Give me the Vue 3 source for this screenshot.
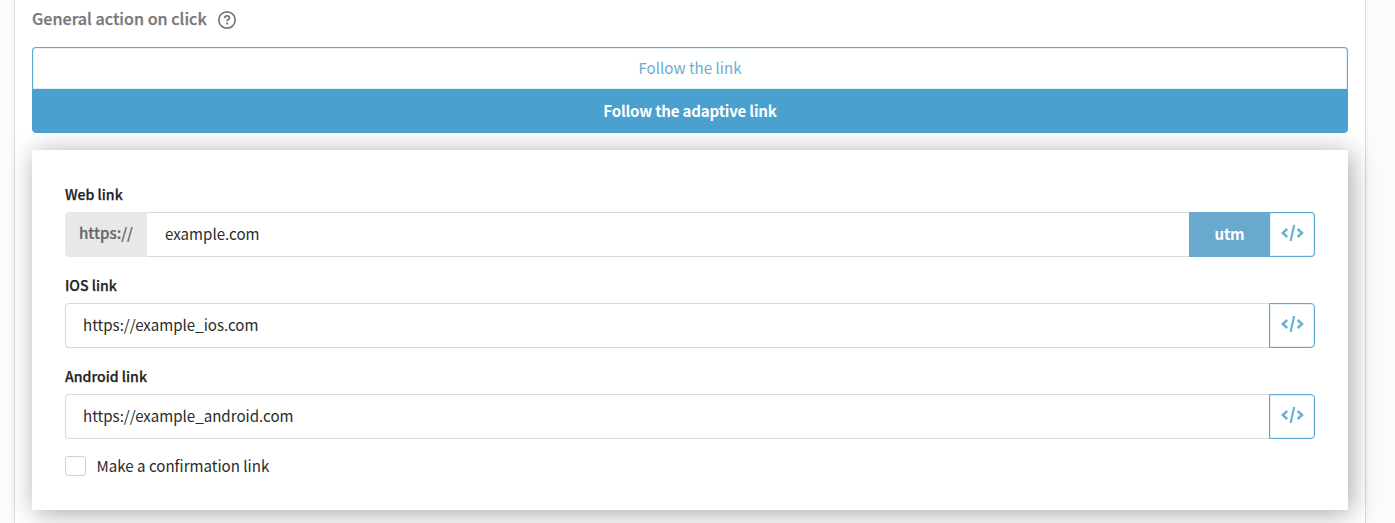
<template>
  <div class="page">
    <section class="panel">
      <div class="heading">
        <span class="title">General action on click</span>
        <svg class="help" width="20" height="20" viewBox="0 0 20 20" fill="none">
          <circle cx="10" cy="10" r="8.2" stroke="#777" stroke-width="1.7" />
          <path d="M7.6 8.1C7.7 6.6 8.7 5.9 10 5.9c1.4 0 2.4.8 2.4 2 0 1.6-2.3 1.7-2.3 3.4" stroke="#777" stroke-width="1.8" />
          <circle cx="10.1" cy="13.6" r="1.1" fill="#777" />
        </svg>
      </div>

      <div class="tabs">
        <button
          v-for="tab in tabs"
          :key="tab.id"
          class="tab"
          :class="{ active: tab.id === activeTab }"
          @click="activeTab = tab.id"
        >
          <span>{{ tab.name }}</span>
        </button>
      </div>

      <div class="card">
        <div v-for="field in fields" :key="field.id" class="field">
          <label class="label" :for="field.id">{{ field.label }}</label>
          <div class="group">
            <span v-if="field.prefix" class="prefix">{{ field.prefix }}</span>
            <input
              :id="field.id"
              v-model="field.value"
              class="input"
              :class="{ prefixed: field.prefix }"
              type="text"
              spellcheck="false"
            />
            <button v-if="field.utm" class="utm">utm</button>
            <button class="code" :class="{ joined: field.utm }">
              <svg width="24" height="20" viewBox="0 0 24 20" fill="none" stroke="#6cb0d4" stroke-width="2.5">
                <path d="M7.2 6L2.8 10l4.4 4" />
                <path d="M17.6 6l4.4 4-4.4 4" />
                <path d="M14.2 2l-3.6 16" stroke-width="2.2" />
              </svg>
            </button>
          </div>
        </div>

        <label class="confirm">
          <input v-model="confirmation" type="checkbox" class="checkbox" />
          <span class="confirm-text">Make a confirmation link</span>
        </label>
      </div>
    </section>
  </div>
</template>

<script setup>
import { ref } from 'vue';

const tabs = [
  { id: 'link', name: 'Follow the link' },
  { id: 'adaptive', name: 'Follow the adaptive link' }
];

const activeTab = ref('adaptive');
const confirmation = ref(false);

const fields = ref([
  { id: 'web', label: 'Web link', prefix: 'https://', value: 'example.com', utm: true },
  { id: 'ios', label: 'IOS link', value: 'https://example_ios.com' },
  { id: 'android', label: 'Android link', value: 'https://example_android.com' }
]);
</script>

<style>
body {
  margin: 0;
  background: #fbfbfb;
}
</style>

<style scoped>
.page {
  box-sizing: border-box;
  height: 523px;
  padding: 0 29px 0 14px;
  overflow: hidden;
  font-family: "Noto Sans CJK SC", "Noto Sans", sans-serif;
  font-size: 15.1px;
  color: #2b2b2b;
}

.page button,
.page input {
  box-sizing: border-box;
  margin: 0;
  font-family: inherit;
  font-size: 15.1px;
}

.panel {
  box-sizing: border-box;
  height: 523px;
  padding: 7px 17px 0;
  background: #fff;
  border: 1px solid #dcdcdc;
  border-width: 0 1px;
  box-shadow: 0 0 3px rgba(0, 0, 0, 0.08);
}

.heading {
  display: flex;
  align-items: center;
  height: 24px;
  margin-bottom: 16px;
}

.title {
  padding-bottom: 2px;
  font-size: 16.15px;
  font-weight: 500;
  line-height: 24px;
  color: #777;
  -webkit-text-stroke: 0.25px #777;
}

.help {
  margin: 2px 0 0 10px;
}

.tabs {
  display: flex;
  flex-direction: column;
  margin-bottom: 17px;
}

.tab {
  height: 42px;
  padding: 0 0 4px;
  line-height: 24px;
  color: #6cadd1;
  background: #fff;
  border: 1px solid #5ba9d0;
  border-bottom: 0;
  border-radius: 4px 4px 0 0;
  box-shadow: inset 0 0 0 1px #e3f0f7;
  cursor: pointer;
}

.tab.active {
  height: 44px;
  padding-bottom: 2px;
  font-weight: 700;
  letter-spacing: -0.2px;
  color: #fff;
  background: #4aa0cf;
  border: 1px solid #4aa0cf;
  border-radius: 0 0 4px 4px;
  box-shadow: none;
}

.card {
  box-sizing: border-box;
  height: 360px;
  padding: 33px 33px 0;
  background: #fff;
  box-shadow: 3px 3px 25px rgba(0, 0, 0, 0.35);
}

.field {
  height: 91px;
}

.label {
  display: block;
  height: 29px;
  font-size: 14.1px;
  font-weight: 500;
  line-height: 22px;
  color: #222;
  -webkit-text-stroke: 0.25px #222;
}

.group {
  display: flex;
  height: 45px;
}

.prefix {
  box-sizing: border-box;
  width: 82px;
  padding-left: 14px;
  font-weight: 500;
  line-height: 41px;
  color: #666;
  background: #e8e8e8;
  border-radius: 4px 0 0 4px;
  -webkit-text-stroke: 0.2px #666;
}

.page .input {
  flex: 1;
  min-width: 0;
  padding: 0 17px 3px;
  color: #2b2b2b;
  background: #fff;
  border: 1px solid #dadada;
  border-right: 0;
  border-radius: 4px 0 0 4px;
  outline: none;
}

.page .input.prefixed {
  padding-left: 18px;
  border-left: 0;
  border-radius: 0;
}

.utm {
  width: 81px;
  padding: 0 0 3px;
  font-weight: 700;
  letter-spacing: -0.2px;
  color: #fff;
  background: #69a9ce;
  border: 0;
}

.code {
  display: flex;
  align-items: center;
  justify-content: center;
  width: 46px;
  padding: 0 0 3px;
  background: #fff;
  border: 1px solid #5ba9d0;
  border-radius: 0 4px 4px 0;
  box-shadow: inset 0 0 0 1px #e3f0f7;
}

.code.joined {
  width: 45px;
  border-left: 0;
}

.confirm {
  display: flex;
  align-items: center;
  height: 24px;
  margin-top: -2px;
}

.checkbox {
  width: 21px;
  height: 20px;
  appearance: none;
  background: #fff;
  border: 1px solid #d0d0d0;
  border-radius: 3px;
}

.confirm-text {
  padding-bottom: 2px;
  margin-left: 10.5px;
  line-height: 24px;
}
</style>
